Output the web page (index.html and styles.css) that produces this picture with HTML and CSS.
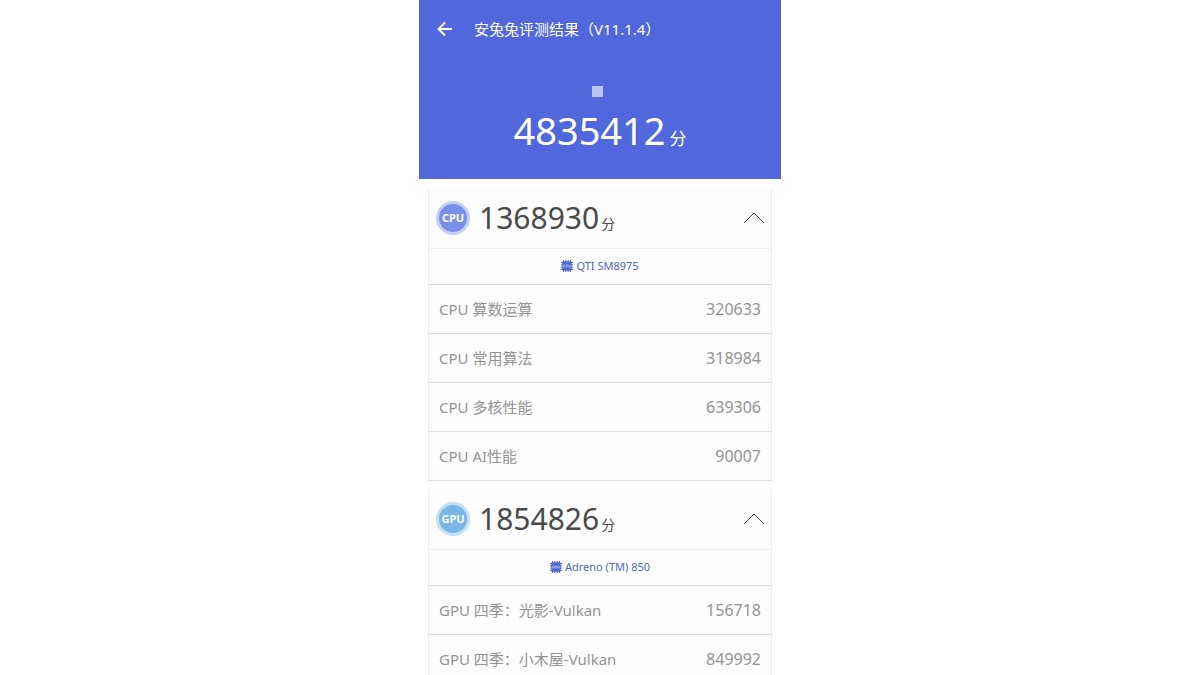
FILE: index.html
```html
<!DOCTYPE html>
<html lang="zh-CN">
<head>
    <meta charset="utf-8">
    <meta name="viewport" content="width=device-width, initial-scale=1">
    <title>安兔兔评测结果</title>
    <link rel="stylesheet" href="styles.css">
</head>
<body>
    <main class="screen">
        <header class="top">
            <div class="title-bar">
                <button type="button" class="back" aria-label="返回">
                    <svg width="16" height="16" viewBox="0 0 16 16" fill="none" stroke="currentColor" stroke-width="1.8">
                        <path d="M15 8H1.5M8 1.5L1.5 8L8 14.5"/>
                    </svg>
                </button>
                <h1>安兔兔评测结果（V11.1.4）</h1>
            </div>
            <div class="marker-row"><div class="marker"></div></div>
            <p class="total">4835412<span class="unit">分</span></p>
        </header>

        <!-- CPU -->
        <section class="card">
            <div class="card-head">
                <span class="badge cpu">CPU</span>
                <h2>1368930<span class="unit">分</span></h2>
                <button type="button" class="toggle" aria-label="收起">
                    <svg width="22" height="12" viewBox="0 0 22 12" fill="none" stroke="currentColor" stroke-width="1">
                        <path d="M1 11L11 1L21 11"/>
                    </svg>
                </button>
            </div>
            <p class="model">
                <svg width="12" height="12" viewBox="0 0 12 12">
                    <path d="M2.5 0V12M4.8 0V12M7.2 0V12M9.5 0V12M0 2.5H12M0 4.8H12M0 7.2H12M0 9.5H12" stroke="#5068d0" stroke-width="1"/>
                    <rect x="1.3" y="1.3" width="9.4" height="9.4" rx="1" fill="#5068d0"/>
                    <path d="M4.3 5H2.7V7H4.3M5.3 7.5V5H6.7V6.2H5.3M7.7 4.8V7H9.3V4.8" fill="none" stroke="#c9d3fa" stroke-width=".6"/>
                </svg>
                QTI SM8975
            </p>
            <table>
                <tr><th scope="row">CPU 算数运算</th><td>320633</td></tr>
                <tr><th scope="row">CPU 常用算法</th><td>318984</td></tr>
                <tr><th scope="row">CPU 多核性能</th><td>639306</td></tr>
                <tr><th scope="row">CPU AI性能</th><td>90007</td></tr>
            </table>
        </section>

        <!-- GPU -->
        <section class="card">
            <div class="card-head">
                <span class="badge gpu">GPU</span>
                <h2>1854826<span class="unit">分</span></h2>
                <button type="button" class="toggle" aria-label="收起">
                    <svg width="22" height="12" viewBox="0 0 22 12" fill="none" stroke="currentColor" stroke-width="1">
                        <path d="M1 11L11 1L21 11"/>
                    </svg>
                </button>
            </div>
            <p class="model">
                <svg width="12" height="12" viewBox="0 0 12 12">
                    <path d="M2.5 0V12M4.8 0V12M7.2 0V12M9.5 0V12M0 2.5H12M0 4.8H12M0 7.2H12M0 9.5H12" stroke="#5068d0" stroke-width="1"/>
                    <rect x="1.3" y="1.3" width="9.4" height="9.4" rx="1" fill="#5068d0"/>
                    <path d="M4.3 5H2.7V7H4.3V6M5.3 7.5V5H6.7V6.2H5.3M7.7 4.8V7H9.3V4.8" fill="none" stroke="#c9d3fa" stroke-width=".6"/>
                </svg>
                Adreno (TM) 850
            </p>
            <table>
                <tr><th scope="row">GPU 四季：光影-Vulkan</th><td>156718</td></tr>
                <tr><th scope="row">GPU 四季：小木屋-Vulkan</th><td>849992</td></tr>
            </table>
        </section>
    </main>
</body>
</html>
```
FILE: styles.css
```css
* {
    box-sizing: border-box;
}

body {
    margin: 0;
    background: #fff;
    font-family: "Noto Sans", "Noto Sans CJK SC", sans-serif;
}

h1, h2, p {
    margin: 0;
    font-weight: 400;
}

button {
    display: flex;
    padding: 0;
    border: none;
    background: none;
    color: inherit;
    cursor: pointer;
}

.screen {
    max-width: 362px;
    margin: 0 auto;
}

.top {
    padding: 17px 18px 24px;
    background: #5068dc;
    color: #fff;
}

.title-bar {
    display: flex;
    align-items: center;
    gap: 21px;
}

.title-bar h1 {
    font-size: 15px;
    line-height: 24px;
}

.marker-row {
    display: flex;
    justify-content: center;
    padding: 45px 6px 8px 0;
}

.marker {
    width: 11px;
    height: 11px;
    background: #b9c5f5;
}

.total {
    font-size: 38px;
    line-height: 50px;
    text-align: center;
}

.unit {
    margin-left: 4px;
    font-size: 17px;
    line-height: 1;
}

.card {
    margin: 9px 9px 8px;
    border: 1px solid #eee;
    border-width: 0 1px;
    background: #fdfdfd;
}

.card + .card {
    margin-top: 0;
}

.card-head {
    display: flex;
    align-items: center;
    height: 61px;
    padding: 0 6px 0 7px;
    border-bottom: 1px solid #eee;
    color: #4a4a4a;
}

.card-head h2 {
    margin-left: 9px;
    font-size: 30px;
    line-height: 40px;
}

.card-head .unit {
    margin-left: 2px;
    font-size: 14px;
}

.badge {
    width: 34px;
    height: 34px;
    border-radius: 50%;
    color: #fff;
    font-size: 11px;
    font-weight: 700;
    line-height: 28px;
    text-align: center;
}

.cpu {
    border: 3px solid #c3cff8;
    background: #7890e8;
}

.gpu {
    border: 3px solid #c0e0f6;
    background: #78b6e6;
}

.toggle {
    margin-left: auto;
}

.model {
    display: flex;
    align-items: center;
    justify-content: center;
    gap: 3px;
    height: 36px;
    padding-bottom: 2px;
    border-bottom: 1px solid #ddd;
    color: #5068b8;
    font-size: 11px;
}

table {
    width: 100%;
    border-collapse: separate;
    border-spacing: 0;
    color: #949494;
    font-size: 15px;
    line-height: 24px;
}

th, td {
    height: 49px;
    padding: 0 10px;
    border-bottom: 1px solid #ddd;
    font-weight: 400;
    text-align: left;
}

td {
    font-size: 16px;
    text-align: right;
}
```
